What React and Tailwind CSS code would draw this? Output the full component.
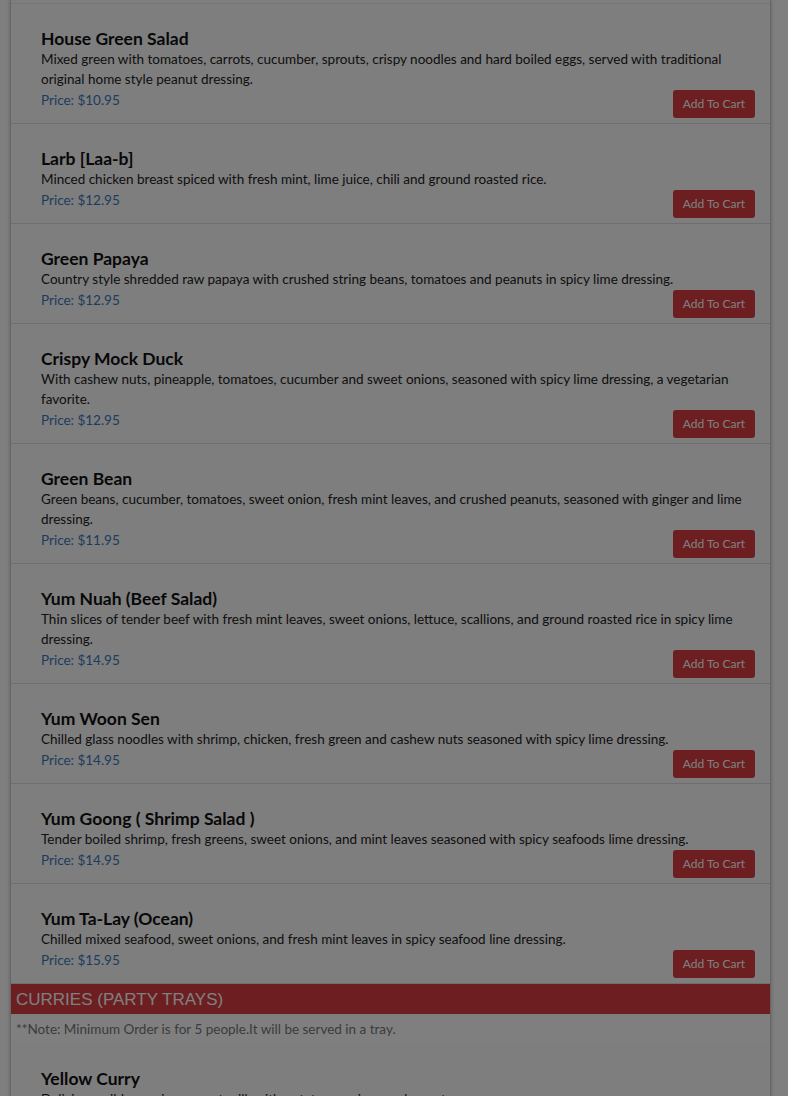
const items = [
  {
    name: "House Green Salad",
    desc: "Mixed green with tomatoes, carrots, cucumber, sprouts, crispy noodles and hard boiled eggs, served with traditional original home style peanut dressing.",
    price: "10.95",
  },
  {
    name: "Larb [Laa-b]",
    desc: "Minced chicken breast spiced with fresh mint, lime juice, chili and ground roasted rice.",
    price: "12.95",
  },
  {
    name: "Green Papaya",
    desc: "Country style shredded raw papaya with crushed string beans, tomatoes and peanuts in spicy lime dressing.",
    price: "12.95",
  },
  {
    name: "Crispy Mock Duck",
    desc: "With cashew nuts, pineapple, tomatoes, cucumber and sweet onions, seasoned with spicy lime dressing, a vegetarian favorite.",
    price: "12.95",
  },
  {
    name: "Green Bean",
    desc: "Green beans, cucumber, tomatoes, sweet onion, fresh mint leaves, and crushed peanuts, seasoned with ginger and lime dressing.",
    price: "11.95",
  },
  {
    name: "Yum Nuah (Beef Salad)",
    desc: "Thin slices of tender beef with fresh mint leaves, sweet onions, lettuce, scallions, and ground roasted rice in spicy lime dressing.",
    price: "14.95",
  },
  {
    name: "Yum Woon Sen",
    desc: "Chilled glass noodles with shrimp, chicken, fresh green and cashew nuts seasoned with spicy lime dressing.",
    price: "14.95",
  },
  {
    name: "Yum Goong ( Shrimp Salad )",
    desc: "Tender boiled shrimp, fresh greens, sweet onions, and mint leaves seasoned with spicy seafoods lime dressing.",
    price: "14.95",
  },
  {
    name: "Yum Ta-Lay (Ocean)",
    desc: "Chilled mixed seafood, sweet onions, and fresh mint leaves in spicy seafood line dressing.",
    price: "15.95",
  },
];

const curries = [
  {
    name: "Yellow Curry",
    desc: "Delicious mild curry in coconut milk with potatoes, onions and carrots.",
    price: "12.95",
  },
];

const MenuItem = ({ item }) => (
  <div className="border-b border-[#dcdcdc] pl-[30px] pr-[15px] pt-[25px] pb-[5px]">
    <h3 className="text-[17.5px] leading-[20px] font-bold text-[#111]">{item.name}</h3>
    <p className="text-[13.5px] leading-[20px] text-[#222]">{item.desc}</p>
    <div className="mt-px flex items-start justify-between">
      <span className="text-[13.5px] leading-[20px] text-[#3a7bbd]">Price: ${item.price}</span>
      <button className="h-[28px] w-[82px] rounded-[3px] bg-[#d83c43] text-[12px] text-white">
        Add To Cart
      </button>
    </div>
  </div>
);

const App = () => {
  return (
    <div className="relative h-[1096px] overflow-hidden bg-white font-['Lato','Open_Sans',sans-serif]">
      <div className="ml-[10px] w-[761px] border-x border-[#cfcfcf] bg-[#fcfcfc] shadow-[0_0_4px_rgba(0,0,0,0.25)]">
        <div className="h-[4px] border-b border-[#ececec]" />
        {items.map((item) => (
          <MenuItem key={item.name} item={item} />
        ))}
        <div className="h-[30px] bg-[#d83c43] pl-[5px] font-['Liberation_Sans',Arial,sans-serif] text-[17px] leading-[32px] text-white">
          CURRIES (PARTY TRAYS)
        </div>
        <div className="h-[30px] bg-white pl-[5px] text-[13.5px] leading-[30px] text-[#777]">
          **Note: Minimum Order is for 5 people.It will be served in a tray.
        </div>
        {curries.map((item) => (
          <MenuItem key={item.name} item={item} />
        ))}
      </div>
      <div className="fixed inset-0 bg-black/50" />
    </div>
  );
};

export default App;
